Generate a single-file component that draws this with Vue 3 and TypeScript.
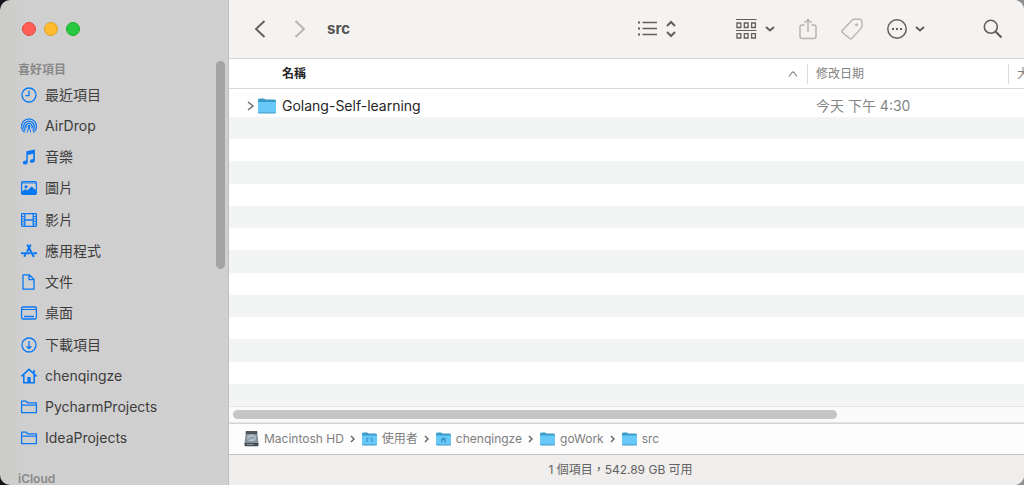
<script setup lang="ts">
interface Place {
  label: string
  icon: string
}

interface Crumb {
  label: string
  kind: 'disk' | 'folder'
  mark?: 'users' | 'home'
}

const places: Place[] = [
  { label: '最近項目', icon: 'clock' },
  { label: 'AirDrop', icon: 'airdrop' },
  { label: '音樂', icon: 'music' },
  { label: '圖片', icon: 'photo' },
  { label: '影片', icon: 'film' },
  { label: '應用程式', icon: 'apps' },
  { label: '文件', icon: 'doc' },
  { label: '桌面', icon: 'desktop' },
  { label: '下載項目', icon: 'download' },
  { label: 'chenqingze', icon: 'home' },
  { label: 'PycharmProjects', icon: 'folder' },
  { label: 'IdeaProjects', icon: 'folder' },
]

const glyphs: Record<string, string> = {
  clock: '<circle cx="9" cy="9" r="7"/><path d="M9 4.5V9.6H5.4"/>',
  airdrop:
    '<path d="M4.6 15.4A7.5 7.5 0 1 1 13.4 15.4"/><path d="M5.4 13.4A5.3 5.3 0 1 1 12.6 13.4"/><path d="M6.4 11.4A3.2 3.2 0 1 1 11.6 11.4"/><path d="M9 9.5 7.2 15.5M9 9.5l1.8 6" stroke-width="1"/><circle cx="9" cy="9.3" r=".8" fill="currentColor"/>',
  music:
    '<path d="M6.3 3.3 14.9 1.4v10.8c0 1.7-1.2 2.4-2.6 2.6-1.5.2-2.4-.5-2.4-1.6 0-1.2 1-1.8 2-2l1.3-.3V5.7L7.8 6.9v7c0 1.6-1.1 2.4-2.5 2.6-1.5.2-2.5-.5-2.5-1.7s.9-1.8 2-2l1.5-.3z" fill="currentColor" stroke="none"/>',
  photo:
    '<rect x="1.6" y="2.7" width="14.8" height="12.6" rx="1.2"/><path d="M2 4h14" stroke-opacity=".6"/><circle cx="6" cy="7.8" r="1.6" fill="currentColor" stroke="none"/><path d="M2 12.3 5.2 10.2l2.2 1.1L11.6 7.4 16 11.2v4H2z" fill="currentColor" stroke="none"/>',
  film:
    '<rect x="1.6" y="2.7" width="14.8" height="12.6" rx=".8"/><path d="M4.8 3v12M13.2 3v12M4.8 9h8.4"/><path d="M2 5.5h2.6M2 8h2.6M2 10.5h2.6M2 13h2.6M13.4 5.5H16M13.4 8H16M13.4 10.5H16M13.4 13H16" stroke-width="1"/>',
  apps:
    '<path d="M7.2 2.6 13.9 15M10.8 2.6 7 9.7M5.5 12.3 4.2 14.8" stroke-width="2"/><path d="M1 11.2h9.5M13.2 11.2H17" stroke-width="2"/>',
  doc:
    '<path d="M3 1.8h6.2L14 6.5v9.7H3zM9 2v4.7h4.8" stroke-linejoin="round"/>',
  desktop:
    '<rect x="1.6" y="3" width="14.8" height="12" rx="1.4"/><path d="M2 5.5h14" stroke-width="1"/><path d="M4 12.5h10" stroke-width="1.7"/>',
  download: '<circle cx="9" cy="9" r="7"/><path d="M9 5v7.5M6.6 10.2 9 12.6l2.4-2.4"/>',
  home:
    '<path d="M1.4 9.3 9 2.4l7.6 6.9M14 6.4V3" stroke-width="1.6"/><path d="M3.8 8v7.8h10.4V8" stroke-width="1.6"/><path d="M7.3 10h3.4v6H7.3z" fill="currentColor" stroke="none"/>',
  folder:
    '<path d="M1.6 14.7V3.2h4.6l1.4 1.6h8.8v9.9zM1.6 7.2h14.8" stroke-linejoin="round"/>',
}

const crumbs: Crumb[] = [
  { label: 'Macintosh HD', kind: 'disk' },
  { label: '使用者', kind: 'folder', mark: 'users' },
  { label: 'chenqingze', kind: 'folder', mark: 'home' },
  { label: 'goWork', kind: 'folder' },
  { label: 'src', kind: 'folder' },
]

const emptyRows = 13
</script>

<template>
  <div class="window">
    <aside class="sidebar">
      <div class="lights">
        <button class="light close" aria-label="關閉"></button>
        <button class="light minimize" aria-label="縮到最小"></button>
        <button class="light expand" aria-label="放大"></button>
      </div>
      <h2 class="group">喜好項目</h2>
      <nav class="places">
        <a v-for="place in places" :key="place.label" href="#" class="place">
          <svg class="place-icon" viewBox="0 0 18 18" aria-hidden="true" v-html="glyphs[place.icon]"></svg>
          <span>{{ place.label }}</span>
        </a>
      </nav>
      <h2 class="group cloud">iCloud</h2>
      <div class="side-thumb"></div>
    </aside>

    <main class="content">
      <header class="toolbar">
        <button class="tool dark" aria-label="返回">
          <svg width="12" height="20" viewBox="0 0 12 20"><path d="M10.5 2 2 10l8.5 8" stroke-width="1.9" /></svg>
        </button>
        <button class="tool light-tool next" aria-label="往前">
          <svg width="12" height="20" viewBox="0 0 12 20"><path d="M1.500 2l8.500 8-8.500 8" stroke-width="1.9" /></svg>
        </button>
        <h1 class="title">src</h1>
        <div class="tools">
          <button class="tool dark" aria-label="顯示方式">
            <svg width="20" height="20" viewBox="0 0 20 20">
              <path d="M4.5 3.5H19M4.5 9.5H19M4.5 15.5H19" stroke-width="1.5" />
              <path d="M0 3.5h2M0 9.5h2M0 15.5h2" stroke-width="2" />
            </svg>
            <svg class="down" width="10" height="20" viewBox="0 0 10 20"><path d="M1 7l4-4 4 4M1 13l4 4 4-4" stroke-width="2" /></svg>
          </button>
          <button class="tool dark arrange" aria-label="分組">
            <svg width="21" height="22" viewBox="0 0 21 22">
              <path d="M0 1.5h20.5M0 12.5h20.5" stroke-width="1.2" />
              <path d="M1 5h3.8v4.5H1zM8.3 5h3.8v4.5H8.3zM15.6 5h3.8v4.5h-3.8zM1 15.6h3.8V20H1zM8.3 15.6h3.8V20H8.3zM15.6 15.6h3.8V20h-3.8z" stroke-width="1.3" />
            </svg>
            <svg class="down" width="10" height="8" viewBox="0 0 10 8"><path d="M1 2l4 3.5L9 2" stroke-width="2" /></svg>
          </button>
          <button class="tool light-tool" aria-label="分享">
            <svg width="18" height="22" viewBox="0 0 18 22"><path d="M5.5 7H3Q1 7 1 9v9.5q0 2 2 2h12q2 0 2-2V9q0-2-2-2h-2.5M9 14V1.5M5.5 5 9 1.5 12.5 5" stroke-width="1.5" /></svg>
          </button>
          <button class="tool light-tool" aria-label="標籤">
            <svg width="22" height="22" viewBox="0 0 22 22">
              <path d="M1 12.8 11 2.2Q12 1.2 13.7 1.2H18q3 0 3 3V8q0 1.4-1 2.4L11 20.3q-1.3 1.2-2.6 0L1.2 14.3q-.8-.8-.2-1.5z" stroke-width="1.4" />
              <circle cx="15.5" cy="6.8" r="1" fill="currentColor" />
            </svg>
          </button>
          <button class="tool dark" aria-label="動作">
            <svg width="20" height="22" viewBox="0 0 20 22">
              <circle cx="10" cy="11" r="9.2" stroke-width="1.5" />
              <path d="M5 11h2M9 11h2M13 11h2" stroke-width="2.2" />
            </svg>
            <svg class="down" width="10" height="8" viewBox="0 0 10 8"><path d="M1 2l4 3.5L9 2" stroke-width="2" /></svg>
          </button>
          <button class="tool dark search" aria-label="搜尋">
            <svg width="20" height="20" viewBox="0 0 20 20">
              <circle cx="7.8" cy="7.8" r="6.5" stroke-width="1.6" />
              <path d="M12.7 12.7 18.5 18.5" stroke-width="2.2" />
            </svg>
          </button>
        </div>
      </header>

      <section class="listing">
        <table>
          <colgroup>
            <col />
            <col class="date-col" />
            <col class="size-col" />
          </colgroup>
          <thead>
            <tr>
              <th class="name-head">
                <div class="head-cell">
                  名稱
                  <svg width="10" height="8" viewBox="0 0 10 8"><path d="M1 6.5 4 2.5Q5 1.5 6 2.5L9 6.5" /></svg>
                </div>
              </th>
              <th><div class="head-cell">修改日期</div></th>
              <th><div class="head-cell">大小</div></th>
            </tr>
          </thead>
          <tbody>
            <tr>
              <td>
                <div class="file">
                  <button class="disclose" aria-label="展開">
                    <svg width="8" height="10" viewBox="0 0 8 10"><path d="M1 1l5 4-5 4" stroke-width="1.5" /></svg>
                  </button>
                  <svg width="18" height="16" viewBox="0 0 18 16" aria-hidden="true">
                    <path d="M0 2Q0 .5 1.5.5H6L7.5 1.5H16.5Q18 1.5 18 3V14q0 1.5-1.5 1.5h-15Q0 15.5 0 14z" fill="#3a98c6" />
                    <path d="M0 4H18V13.5q0 1-1 1H1q-1 0-1-1z" fill="#68c8f8" />
                  </svg>
                  <span>Golang-Self-learning</span>
                </div>
              </td>
              <td class="date">今天 下午 4:30</td>
              <td></td>
            </tr>
          </tbody>
        </table>
        <div class="stripes" aria-hidden="true">
          <div v-for="n in emptyRows" :key="n" class="stripe"></div>
        </div>
      </section>

      <div class="scroll-track"><div class="scroll-thumb"></div></div>

      <nav class="path">
        <template v-for="(crumb, i) in crumbs" :key="crumb.label">
          <svg v-if="i > 0" class="sep" width="5" height="8" viewBox="0 0 5 8"><path d="M1 1l3 3-3 3" /></svg>
          <a href="#" class="crumb">
            <svg v-if="crumb.kind === 'disk'" width="15" height="16" viewBox="0 0 15 16" aria-hidden="true">
              <path d="M2 0h11l1.5 12H.5z" fill="#84919a" />
              <path d="M2 0h11l.4 3H1.6z" fill="#4f565c" />
              <ellipse cx="7.5" cy="7" rx="4.5" ry="3.6" fill="#aebdc7" />
              <path d="M4.5 8.5 7.5 6.5l2.5.5" stroke="#6c7982" fill="none" />
              <path d="M.5 12h14V14.5q0 .8-1 .8h-12q-1 0-1-.8z" fill="#444c52" />
              <path d="M2.5 13.5h7" stroke="#8d979e" />
            </svg>
            <svg v-else width="15" height="16" viewBox="0 0 15 16" aria-hidden="true">
              <path d="M0 3Q0 1.5 1.5 1.5H5L6.5 2.5H13.5Q15 2.5 15 4V13q0 1.5-1.5 1.5h-12Q0 14.5 0 13z" fill="#3b9bc9" />
              <path d="M0 4.5H15V12.5q0 1-1 1H1q-1 0-1-1z" fill="#68c8f8" />
              <path v-if="crumb.mark === 'users'" d="M5 11V8.5Q5 7 6.5 7M10 11V8.5Q10 7 8.5 7" stroke="#3a97c8" fill="none" stroke-width="1.2" />
              <path v-if="crumb.mark === 'home'" d="M5 11.5V8L7.5 6.3 10 8V11.5H8.5V9.2H6.5V11.5z" fill="#3a97c8" />
            </svg>
            <span>{{ crumb.label }}</span>
          </a>
        </template>
      </nav>

      <footer class="status">1 個項目，542.89 GB 可用</footer>
    </main>
  </div>
</template>

<style>
body {
  background: linear-gradient(90deg, #17131a 50%, #8f8f8f 50%);
}
</style>

<style scoped>
.window {
  display: flex;
  height: 100vh;
  overflow: hidden;
  border-radius: 10px;
  font-family: Inter, "Noto Sans CJK TC", sans-serif;
  font-size: 14px;
  color: #262626;
}

button {
  padding: 0;
  border: 0;
  background: none;
  color: inherit;
}

a {
  color: inherit;
  text-decoration: none;
}

svg {
  display: block;
  flex: none;
}

.sidebar {
  position: relative;
  display: flex;
  flex-direction: column;
  flex: none;
  width: 228px;
  border-right: 1px solid #c0bebf;
  background: linear-gradient(90deg, #cbcbc8, #d0cfcf 24px, #d1d0d0);
}

.lights {
  display: flex;
  gap: 8px;
  padding: 22px 22px 0;
}

.light {
  box-sizing: border-box;
  width: 14px;
  height: 14px;
  border: 1px solid;
  border-radius: 50%;
}

.close {
  border-color: #e2463f;
  background: #ff5f57;
}

.minimize {
  border-color: #dfa023;
  background: #febc2e;
}

.expand {
  border-color: #1dad2b;
  background: #28c840;
}

.group {
  margin: 24px 18px 0;
  font-size: 12px;
  font-weight: 600;
  line-height: 19px;
  color: #8a8989;
}

.places {
  display: flex;
  flex: 1;
  flex-direction: column;
}

.place {
  display: flex;
  flex: 1;
  align-items: center;
  gap: 7px;
  padding-left: 20px;
  line-height: 20px;
  color: #3d3d3d;
}

.place-icon {
  width: 18px;
  height: 18px;
  fill: none;
  stroke: currentColor;
  stroke-width: 1.3;
  color: #0a78f5;
}

.cloud {
  margin-top: 19px;
  line-height: 12px;
}

.side-thumb {
  position: absolute;
  top: 61px;
  right: 3px;
  width: 9px;
  height: 208px;
  border-radius: 5px;
  background: #a5a4a4;
}

.content {
  display: flex;
  flex: 1;
  flex-direction: column;
  min-width: 0;
  background: #fff;
}

.toolbar {
  display: flex;
  align-items: center;
  box-sizing: border-box;
  height: 59px;
  padding: 0 21px 0 25px;
  border-bottom: 1px solid #d9d8d7;
  background: #f5f3f2;
}

.tool {
  display: flex;
  align-items: center;
}

.tool svg {
  fill: none;
  stroke: currentColor;
}

.dark {
  color: #605f5e;
}

.light-tool {
  color: #b7b5b4;
}

.next {
  margin-left: 28px;
}

.title {
  margin: 0 0 0 21px;
  font-size: 15px;
  font-weight: 700;
  line-height: 20px;
  color: #545353;
}

.tools {
  display: flex;
  align-items: center;
  gap: 24px;
  margin-left: auto;
}

.down {
  margin-left: 8px;
}

.arrange {
  margin-left: 36px;
}

.search {
  margin-left: 34px;
}

.listing {
  display: flex;
  flex: 1;
  flex-direction: column;
  min-height: 0;
}

table {
  width: 100%;
  table-layout: fixed;
  border-collapse: collapse;
}

.date-col {
  width: 201px;
}

.size-col {
  width: 16px;
}

th {
  height: 29px;
  padding: 0;
  border-bottom: 1px solid #d9d9d9;
  font-size: 12px;
  font-weight: 400;
  text-align: left;
  color: #828282;
}

.head-cell {
  display: flex;
  align-items: center;
  justify-content: space-between;
  overflow: hidden;
  height: 20px;
  padding-left: 8px;
  border-left: 1px solid #dcdcdc;
  line-height: 20px;
  white-space: nowrap;
}

.name-head {
  font-weight: 600;
  color: #262626;
}

.name-head .head-cell {
  padding: 0 9px 0 52px;
  border-left-color: transparent;
}

.name-head svg {
  fill: none;
  stroke: #8c8c8c;
  stroke-width: 1.2;
}

td {
  height: 22px;
  padding: 6px 0 0;
}

.file {
  display: flex;
  align-items: center;
  padding-left: 18px;
  line-height: 20px;
}

.file span {
  margin-left: 6px;
}

.disclose {
  margin-right: 3px;
}

.disclose svg {
  fill: none;
  stroke: #6d6d6d;
}

.date {
  padding-left: 9px;
  line-height: 20px;
  color: #858585;
}

.stripes {
  display: flex;
  flex: 1;
  flex-direction: column;
}

.stripe {
  flex: 1;
}

.stripe:nth-child(odd) {
  background: #f3f5f5;
}

.scroll-track {
  box-sizing: border-box;
  height: 17px;
  padding: 3px 187px 0 4px;
  border-top: 1px solid #e6e6e6;
  border-bottom: 1px solid #e6e6e6;
  background: #fafafa;
}

.scroll-thumb {
  height: 9px;
  border-radius: 5px;
  background: #c5c5c5;
}

.path {
  display: flex;
  align-items: center;
  box-sizing: border-box;
  height: 32px;
  padding-left: 15px;
  border-top: 1px solid #d4d4d4;
  border-bottom: 1px solid #c4c4c4;
  background: #fdfdfd;
  font-size: 12px;
  line-height: 20px;
  color: #7d7d7d;
}

.crumb {
  display: flex;
  align-items: center;
  gap: 5px;
}

.sep {
  margin: 0 7px 0 6px;
  fill: none;
  stroke: #5c5c5c;
  stroke-width: 1.3;
}

.status {
  height: 30px;
  padding-right: 12px;
  background: #efeeed;
  font-size: 12px;
  line-height: 30px;
  text-align: center;
  color: #626262;
}
</style>
